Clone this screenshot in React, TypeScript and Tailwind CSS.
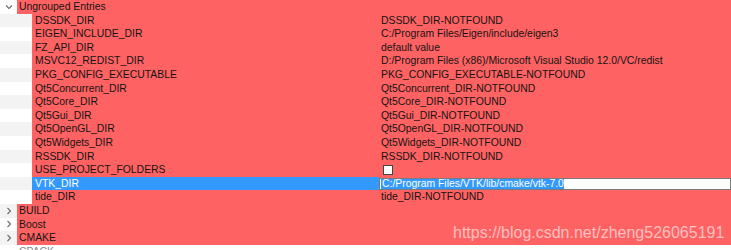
import { useState } from "react";

type Entry = {
  name: string;
  value: string;
  kind?: "text" | "bool" | "edit";
};

const entries: Entry[] = [
  { name: "DSSDK_DIR", value: "DSSDK_DIR-NOTFOUND" },
  { name: "EIGEN_INCLUDE_DIR", value: "C:/Program Files/Eigen/include/eigen3" },
  { name: "FZ_API_DIR", value: "default value" },
  { name: "MSVC12_REDIST_DIR", value: "D:/Program Files (x86)/Microsoft Visual Studio 12.0/VC/redist" },
  { name: "PKG_CONFIG_EXECUTABLE", value: "PKG_CONFIG_EXECUTABLE-NOTFOUND" },
  { name: "Qt5Concurrent_DIR", value: "Qt5Concurrent_DIR-NOTFOUND" },
  { name: "Qt5Core_DIR", value: "Qt5Core_DIR-NOTFOUND" },
  { name: "Qt5Gui_DIR", value: "Qt5Gui_DIR-NOTFOUND" },
  { name: "Qt5OpenGL_DIR", value: "Qt5OpenGL_DIR-NOTFOUND" },
  { name: "Qt5Widgets_DIR", value: "Qt5Widgets_DIR-NOTFOUND" },
  { name: "RSSDK_DIR", value: "RSSDK_DIR-NOTFOUND" },
  { name: "USE_PROJECT_FOLDERS", value: "", kind: "bool" },
  { name: "VTK_DIR", value: "C:/Program Files/VTK/lib/cmake/vtk-7.0", kind: "edit" },
  { name: "tide_DIR", value: "tide_DIR-NOTFOUND" },
];

const groups = ["BUILD", "Boost", "CMAKE"];

const Chevron = ({ open }: { open: boolean }) => (
  <svg width="8" height="8" viewBox="0 0 8 8" className="text-[#6b6b6b]">
    {open ? (
      <path d="M1 2.5 L4 5.5 L7 2.5" fill="none" stroke="currentColor" strokeWidth="1.1" />
    ) : (
      <path d="M2.5 1 L5.5 4 L2.5 7" fill="none" stroke="currentColor" strokeWidth="1.1" />
    )}
  </svg>
);

const App = () => {
  const [checked, setChecked] = useState(false);

  return (
    <div
      className="w-[731px] h-[250px] overflow-hidden bg-white text-[10.4px] text-[#141414] relative"
      style={{ fontFamily: "'Liberation Sans', Arial, sans-serif" }}
    >
      {/* group header */}
      <div className="flex h-[13.6px] items-center">
        <div className="w-[17px] flex justify-center">
          <Chevron open />
        </div>
        <div className="flex-1 h-full bg-[#ff6262] pl-[2px] leading-[13.6px]">Ungrouped Entries</div>
      </div>

      {entries.map((e, i) => (
        <div key={e.name} className="flex h-[13.6px]">
          <div className={i % 2 === 0 ? "w-[32px] bg-[#f3f3f3]" : "w-[32px] bg-white"} />
          <div
            className={
              e.kind === "edit"
                ? "w-[347px] bg-[#3399ff] text-white pl-[3px] leading-[13.6px]"
                : "w-[347px] bg-[#ff6262] pl-[3px] leading-[13.6px]"
            }
          >
            {e.name}
          </div>
          <div className="flex-1 bg-[#ff6262] flex items-center">
            {e.kind === "bool" && (
              <button
                onClick={() => setChecked(!checked)}
                className="ml-[4px] w-[10px] h-[10px] bg-white border border-[#444444]"
              />
            )}
            {e.kind === "edit" && (
              <div className="h-[12px] w-full bg-white border border-[#7a7a7a] flex items-center pl-[1px] overflow-hidden">
                <span className="bg-[#3399ff] text-white leading-[10px] pl-[1px]">{e.value}</span>
              </div>
            )}
            {!e.kind && <span className="pl-[2px] leading-[13.6px]">{e.value}</span>}
          </div>
        </div>
      ))}

      {groups.map((g, i) => (
        <div key={g} className="flex h-[13.6px]">
          <div className={i % 2 === 0 ? "w-[17px] bg-[#f3f3f3] flex items-center justify-center" : "w-[17px] bg-white flex items-center justify-center"}>
            <Chevron open={false} />
          </div>
          <div className="flex-1 bg-[#ff6262] pl-[2px] leading-[13.6px]">{g}</div>
        </div>
      ))}

      <div className="flex h-[13.6px] bg-white">
        <div className="w-[17px]" />
        <div className="pl-[2px] leading-[13.6px] text-[#8a8a8a]">CPACK</div>
      </div>

      <div className="absolute left-[453px] top-[221px] text-[16px] text-white/60">
        https://blog.csdn.net/zheng526065191
      </div>
    </div>
  );
};

export default App;
